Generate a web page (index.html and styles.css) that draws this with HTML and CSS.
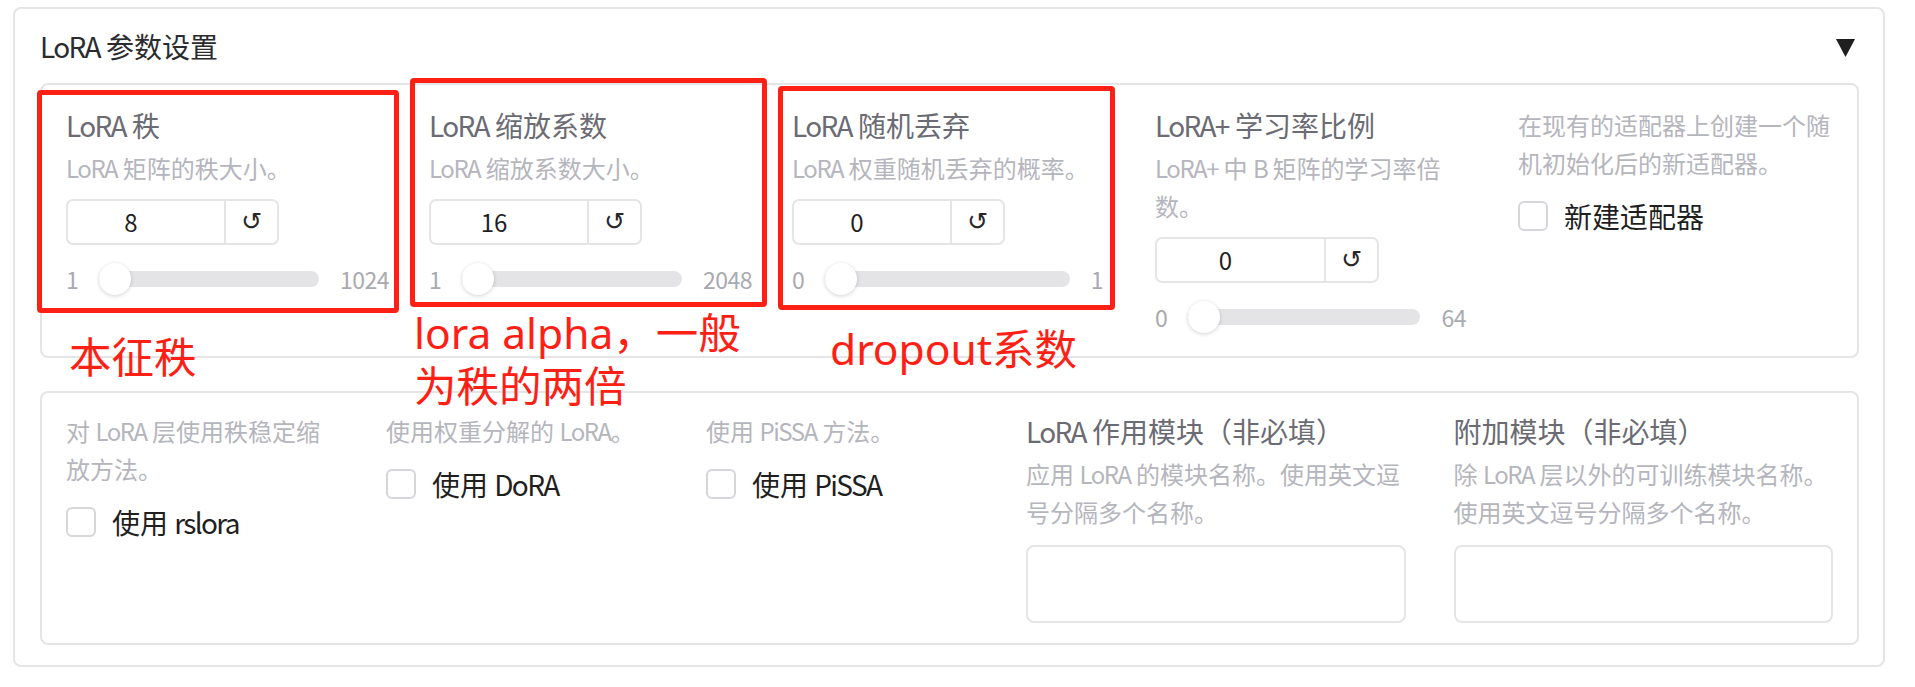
FILE: index.html
```html
<!DOCTYPE html>
<html lang="zh-CN">
<head>
<meta charset="utf-8">
<title>LoRA 参数设置</title>
<link rel="stylesheet" href="styles.css">
</head>
<body>
<div class="panel">
  <div class="panel-head">
    <span class="panel-title"><span class="en">LoRA</span> 参数设置</span>
    <svg class="caret" viewBox="0 0 19 18"><polygon points="0,0 19,0 9.5,18" fill="#1f1f1f"/></svg>
  </div>

  <div class="box box-sliders">
    <div class="field">
      <div class="label"><span class="en">LoRA</span> 秩</div>
      <div class="info"><span class="en">LoRA</span> 矩阵的秩大小。</div>
      <div class="numbox"><div class="num">8</div><div class="reset">↺</div></div>
      <div class="slider"><span class="bound">1</span><div class="track"><div class="fill"></div><div class="thumb"></div></div><span class="bound bound-max bound-wide">1024</span></div>
    </div>
    <div class="field">
      <div class="label"><span class="en">LoRA</span> 缩放系数</div>
      <div class="info"><span class="en">LoRA</span> 缩放系数大小。</div>
      <div class="numbox"><div class="num">16</div><div class="reset">↺</div></div>
      <div class="slider"><span class="bound">1</span><div class="track"><div class="fill"></div><div class="thumb"></div></div><span class="bound bound-max bound-wide">2048</span></div>
    </div>
    <div class="field">
      <div class="label"><span class="en">LoRA</span> 随机丢弃</div>
      <div class="info"><span class="en">LoRA</span> 权重随机丢弃的概率。</div>
      <div class="numbox"><div class="num">0</div><div class="reset">↺</div></div>
      <div class="slider"><span class="bound">0</span><div class="track"><div class="fill"></div><div class="thumb"></div></div><span class="bound bound-max">1</span></div>
    </div>
    <div class="field">
      <div class="label"><span class="en">LoRA+</span> 学习率比例</div>
      <div class="info"><span class="en">LoRA+</span> 中 <span class="en">B</span> 矩阵的学习率倍数。</div>
      <div class="numbox numbox-wide"><div class="num">0</div><div class="reset">↺</div></div>
      <div class="slider"><span class="bound">0</span><div class="track"><div class="fill"></div><div class="thumb"></div></div><span class="bound bound-max">64</span></div>
    </div>
    <div class="field">
      <div class="info">在现有的适配器上创建一个随机初始化后的新适配器。</div>
      <div class="check"><span class="check-box"></span><span class="check-text">新建适配器</span></div>
    </div>
  </div>

  <div class="box box-options">
    <div class="field">
      <div class="info">对 <span class="en">LoRA</span> 层使用秩稳定缩放方法。</div>
      <div class="check"><span class="check-box"></span><span class="check-text">使用 <span class="en">rslora</span></span></div>
    </div>
    <div class="field">
      <div class="info">使用权重分解的 <span class="en">LoRA</span>。</div>
      <div class="check"><span class="check-box"></span><span class="check-text">使用 <span class="en">DoRA</span></span></div>
    </div>
    <div class="field">
      <div class="info">使用 <span class="en">PiSSA</span> 方法。</div>
      <div class="check"><span class="check-box"></span><span class="check-text">使用 <span class="en">PiSSA</span></span></div>
    </div>
    <div class="field">
      <div class="label"><span class="en">LoRA</span> 作用模块（非必填）</div>
      <div class="info">应用 <span class="en">LoRA</span> 的模块名称。使用英文逗号分隔多个名称。</div>
      <div class="textbox"></div>
    </div>
    <div class="field">
      <div class="label">附加模块（非必填）</div>
      <div class="info">除 <span class="en">LoRA</span> 层以外的可训练模块名称。使用英文逗号分隔多个名称。</div>
      <div class="textbox"></div>
    </div>
  </div>
</div>

<div class="frame frame-rank"></div>
<div class="frame frame-alpha"></div>
<div class="frame frame-dropout"></div>
<div class="note note-rank">本征秩</div>
<div class="note note-alpha">lora alpha，一般<br>为秩的两倍</div>
<div class="note note-dropout">dropout系数</div>
</body>
</html>
```

FILE: styles.css
```css
* { box-sizing: border-box; }

body {
  margin: 0;
  width: 1915px;
  height: 687px;
  overflow: hidden;
  position: relative;
  background: #ffffff;
  font-family: "Noto Sans CJK SC", sans-serif;
  color: #1f1f1f;
}

.en { letter-spacing: -0.06em; }

.panel {
  margin: 7px 0 0 13px;
  width: 1872px;
  border: 2px solid #e5e5e8;
  border-radius: 8px;
  padding: 17px 24px 20px 25px;
}

.panel-head {
  height: 40px;
  display: flex;
  align-items: center;
  justify-content: space-between;
  padding-right: 4px;
}

.panel-title {
  font-size: 28px;
  line-height: 40px;
  color: #2b2b2e;
}

.caret {
  width: 19px;
  height: 18px;
  margin-top: 3px;
}

.box {
  border: 2px solid #e5e5e8;
  border-radius: 8px;
  display: grid;
  column-gap: 48px;
  align-items: start;
}

.box-sliders {
  margin-top: 17px;
  padding: 21px 24px 23px;
  grid-template-columns: repeat(5, 1fr);
}

.box-options {
  margin-top: 33px;
  padding: 19px 24px 20px;
  grid-template-columns: 272px 272px 272px 1fr 1fr;
}

.field {
  display: flex;
  flex-direction: column;
  min-width: 0;
}

.label {
  font-size: 28px;
  line-height: 38px;
  color: #6b6b73;
}

.info {
  font-size: 24px;
  line-height: 38px;
  color: #b5b5bd;
  margin-top: 5px;
}

.field > .info:first-child { margin-top: 0; }

.numbox {
  margin-top: 12px;
  width: 213px;
  height: 46px;
  border: 2px solid #e5e5e8;
  border-radius: 7px;
  display: flex;
}

.numbox-wide { width: 224px; }

.num {
  flex: 1;
  font-size: 24px;
  line-height: 42px;
  text-align: center;
  padding-right: 30px;
  color: #1f1f1f;
}

.reset {
  width: 53px;
  border-left: 2px solid #e5e5e8;
  display: flex;
  align-items: center;
  justify-content: center;
  font-family: "DejaVu Sans", sans-serif;
  font-size: 25px;
  line-height: 42px;
  color: #27272a;
}

.slider {
  margin-top: 18px;
  height: 32px;
  display: flex;
  align-items: center;
  gap: 21px;
}

.bound {
  font-size: 23px;
  line-height: 32px;
  letter-spacing: -0.5px;
  color: #a9a9b1;
}

.bound-max { margin-right: 4px; }
.bound-max.bound-wide { margin-right: -8px; }

.track {
  flex: 1;
  height: 16px;
  border-radius: 8px;
  background: #e4e4e7;
  position: relative;
}

.fill {
  position: absolute;
  left: 0;
  top: 0;
  width: 16px;
  height: 16px;
  border-radius: 8px;
  background: #f8a26a;
}

.thumb {
  position: absolute;
  left: 0;
  top: -8px;
  width: 32px;
  height: 32px;
  border-radius: 50%;
  background: #ffffff;
  box-shadow: 0 1px 4px rgba(0, 0, 0, 0.18);
}

.textbox {
  margin-top: 14px;
  height: 78px;
  border: 2px solid #e5e5e8;
  border-radius: 8px;
}

.check {
  margin-top: 15px;
  height: 38px;
  display: flex;
  align-items: center;
  gap: 16px;
}

.check-box {
  flex: none;
  width: 30px;
  height: 30px;
  border: 2px solid #d6d6db;
  border-radius: 6px;
}

.check-text {
  font-size: 28px;
  line-height: 38px;
  color: #1f1f1f;
}

/* annotation overlays */
.frame {
  position: absolute;
  border: 5px solid #fe2014;
  border-radius: 4px;
}

.frame-rank { left: 37px; top: 90px; width: 362px; height: 223px; }
.frame-alpha { left: 410px; top: 78px; width: 357px; height: 229px; }
.frame-dropout { left: 778px; top: 86px; width: 337px; height: 224px; }

.note {
  position: absolute;
  font-family: "Noto Sans", "Noto Sans CJK SC", sans-serif;
  font-size: 42.5px;
  line-height: 53px;
  color: #fe2014;
  white-space: nowrap;
}

.note-rank { left: 69px; top: 330px; }
.note-alpha { left: 414px; top: 306px; }
.note-dropout { left: 830px; top: 322px; }
```
